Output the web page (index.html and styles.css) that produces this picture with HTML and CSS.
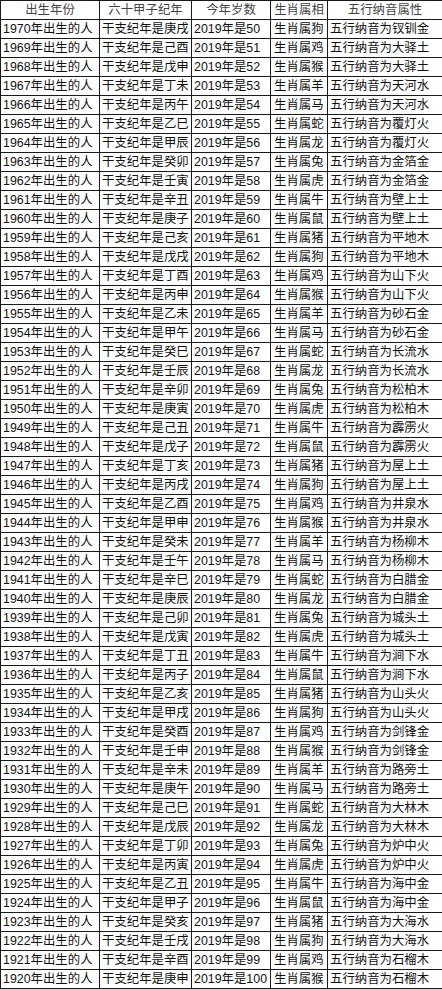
FILE: index.html
```html
<!DOCTYPE html>
<html lang="zh">
<head>
<meta charset="utf-8">
<title>出生年份</title>
<link rel="stylesheet" href="styles.css">
</head>
<body>
<table class="tbl">
<colgroup>
<col class="c1"><col class="c2"><col class="c3"><col class="c4"><col class="c5">
</colgroup>
<thead>
<tr><th>出生年份</th><th>六十甲子纪年</th><th>今年岁数</th><th>生肖属相</th><th>五行纳音属性</th></tr>
</thead>
<tbody>
<tr><td>1970年出生的人</td><td>干支纪年是庚戌</td><td>2019年是50</td><td>生肖属狗</td><td>五行纳音为钗钏金</td></tr>
<tr><td>1969年出生的人</td><td>干支纪年是己酉</td><td>2019年是51</td><td>生肖属鸡</td><td>五行纳音为大驿土</td></tr>
<tr><td>1968年出生的人</td><td>干支纪年是戊申</td><td>2019年是52</td><td>生肖属猴</td><td>五行纳音为大驿土</td></tr>
<tr><td>1967年出生的人</td><td>干支纪年是丁未</td><td>2019年是53</td><td>生肖属羊</td><td>五行纳音为天河水</td></tr>
<tr><td>1966年出生的人</td><td>干支纪年是丙午</td><td>2019年是54</td><td>生肖属马</td><td>五行纳音为天河水</td></tr>
<tr><td>1965年出生的人</td><td>干支纪年是乙巳</td><td>2019年是55</td><td>生肖属蛇</td><td>五行纳音为覆灯火</td></tr>
<tr><td>1964年出生的人</td><td>干支纪年是甲辰</td><td>2019年是56</td><td>生肖属龙</td><td>五行纳音为覆灯火</td></tr>
<tr><td>1963年出生的人</td><td>干支纪年是癸卯</td><td>2019年是57</td><td>生肖属兔</td><td>五行纳音为金箔金</td></tr>
<tr><td>1962年出生的人</td><td>干支纪年是壬寅</td><td>2019年是58</td><td>生肖属虎</td><td>五行纳音为金箔金</td></tr>
<tr><td>1961年出生的人</td><td>干支纪年是辛丑</td><td>2019年是59</td><td>生肖属牛</td><td>五行纳音为壁上土</td></tr>
<tr><td>1960年出生的人</td><td>干支纪年是庚子</td><td>2019年是60</td><td>生肖属鼠</td><td>五行纳音为壁上土</td></tr>
<tr><td>1959年出生的人</td><td>干支纪年是己亥</td><td>2019年是61</td><td>生肖属猪</td><td>五行纳音为平地木</td></tr>
<tr><td>1958年出生的人</td><td>干支纪年是戊戌</td><td>2019年是62</td><td>生肖属狗</td><td>五行纳音为平地木</td></tr>
<tr><td>1957年出生的人</td><td>干支纪年是丁酉</td><td>2019年是63</td><td>生肖属鸡</td><td>五行纳音为山下火</td></tr>
<tr><td>1956年出生的人</td><td>干支纪年是丙申</td><td>2019年是64</td><td>生肖属猴</td><td>五行纳音为山下火</td></tr>
<tr><td>1955年出生的人</td><td>干支纪年是乙未</td><td>2019年是65</td><td>生肖属羊</td><td>五行纳音为砂石金</td></tr>
<tr><td>1954年出生的人</td><td>干支纪年是甲午</td><td>2019年是66</td><td>生肖属马</td><td>五行纳音为砂石金</td></tr>
<tr><td>1953年出生的人</td><td>干支纪年是癸巳</td><td>2019年是67</td><td>生肖属蛇</td><td>五行纳音为长流水</td></tr>
<tr><td>1952年出生的人</td><td>干支纪年是壬辰</td><td>2019年是68</td><td>生肖属龙</td><td>五行纳音为长流水</td></tr>
<tr><td>1951年出生的人</td><td>干支纪年是辛卯</td><td>2019年是69</td><td>生肖属兔</td><td>五行纳音为松柏木</td></tr>
<tr><td>1950年出生的人</td><td>干支纪年是庚寅</td><td>2019年是70</td><td>生肖属虎</td><td>五行纳音为松柏木</td></tr>
<tr><td>1949年出生的人</td><td>干支纪年是己丑</td><td>2019年是71</td><td>生肖属牛</td><td>五行纳音为霹雳火</td></tr>
<tr><td>1948年出生的人</td><td>干支纪年是戊子</td><td>2019年是72</td><td>生肖属鼠</td><td>五行纳音为霹雳火</td></tr>
<tr><td>1947年出生的人</td><td>干支纪年是丁亥</td><td>2019年是73</td><td>生肖属猪</td><td>五行纳音为屋上土</td></tr>
<tr><td>1946年出生的人</td><td>干支纪年是丙戌</td><td>2019年是74</td><td>生肖属狗</td><td>五行纳音为屋上土</td></tr>
<tr><td>1945年出生的人</td><td>干支纪年是乙酉</td><td>2019年是75</td><td>生肖属鸡</td><td>五行纳音为井泉水</td></tr>
<tr><td>1944年出生的人</td><td>干支纪年是甲申</td><td>2019年是76</td><td>生肖属猴</td><td>五行纳音为井泉水</td></tr>
<tr><td>1943年出生的人</td><td>干支纪年是癸未</td><td>2019年是77</td><td>生肖属羊</td><td>五行纳音为杨柳木</td></tr>
<tr><td>1942年出生的人</td><td>干支纪年是壬午</td><td>2019年是78</td><td>生肖属马</td><td>五行纳音为杨柳木</td></tr>
<tr><td>1941年出生的人</td><td>干支纪年是辛巳</td><td>2019年是79</td><td>生肖属蛇</td><td>五行纳音为白腊金</td></tr>
<tr><td>1940年出生的人</td><td>干支纪年是庚辰</td><td>2019年是80</td><td>生肖属龙</td><td>五行纳音为白腊金</td></tr>
<tr><td>1939年出生的人</td><td>干支纪年是己卯</td><td>2019年是81</td><td>生肖属兔</td><td>五行纳音为城头土</td></tr>
<tr><td>1938年出生的人</td><td>干支纪年是戊寅</td><td>2019年是82</td><td>生肖属虎</td><td>五行纳音为城头土</td></tr>
<tr><td>1937年出生的人</td><td>干支纪年是丁丑</td><td>2019年是83</td><td>生肖属牛</td><td>五行纳音为涧下水</td></tr>
<tr><td>1936年出生的人</td><td>干支纪年是丙子</td><td>2019年是84</td><td>生肖属鼠</td><td>五行纳音为涧下水</td></tr>
<tr><td>1935年出生的人</td><td>干支纪年是乙亥</td><td>2019年是85</td><td>生肖属猪</td><td>五行纳音为山头火</td></tr>
<tr><td>1934年出生的人</td><td>干支纪年是甲戌</td><td>2019年是86</td><td>生肖属狗</td><td>五行纳音为山头火</td></tr>
<tr><td>1933年出生的人</td><td>干支纪年是癸酉</td><td>2019年是87</td><td>生肖属鸡</td><td>五行纳音为剑锋金</td></tr>
<tr><td>1932年出生的人</td><td>干支纪年是壬申</td><td>2019年是88</td><td>生肖属猴</td><td>五行纳音为剑锋金</td></tr>
<tr><td>1931年出生的人</td><td>干支纪年是辛未</td><td>2019年是89</td><td>生肖属羊</td><td>五行纳音为路旁土</td></tr>
<tr><td>1930年出生的人</td><td>干支纪年是庚午</td><td>2019年是90</td><td>生肖属马</td><td>五行纳音为路旁土</td></tr>
<tr><td>1929年出生的人</td><td>干支纪年是己巳</td><td>2019年是91</td><td>生肖属蛇</td><td>五行纳音为大林木</td></tr>
<tr><td>1928年出生的人</td><td>干支纪年是戊辰</td><td>2019年是92</td><td>生肖属龙</td><td>五行纳音为大林木</td></tr>
<tr><td>1927年出生的人</td><td>干支纪年是丁卯</td><td>2019年是93</td><td>生肖属兔</td><td>五行纳音为炉中火</td></tr>
<tr><td>1926年出生的人</td><td>干支纪年是丙寅</td><td>2019年是94</td><td>生肖属虎</td><td>五行纳音为炉中火</td></tr>
<tr><td>1925年出生的人</td><td>干支纪年是乙丑</td><td>2019年是95</td><td>生肖属牛</td><td>五行纳音为海中金</td></tr>
<tr><td>1924年出生的人</td><td>干支纪年是甲子</td><td>2019年是96</td><td>生肖属鼠</td><td>五行纳音为海中金</td></tr>
<tr><td>1923年出生的人</td><td>干支纪年是癸亥</td><td>2019年是97</td><td>生肖属猪</td><td>五行纳音为大海水</td></tr>
<tr><td>1922年出生的人</td><td>干支纪年是壬戌</td><td>2019年是98</td><td>生肖属狗</td><td>五行纳音为大海水</td></tr>
<tr><td>1921年出生的人</td><td>干支纪年是辛酉</td><td>2019年是99</td><td>生肖属鸡</td><td>五行纳音为石榴木</td></tr>
<tr><td>1920年出生的人</td><td>干支纪年是庚申</td><td>2019年是100</td><td>生肖属猴</td><td>五行纳音为石榴木</td></tr>
</tbody>
</table>
</body>
</html>
```

FILE: styles.css
```css
html, body {
  margin: 0;
  padding: 0;
  background: #fff;
}

.tbl {
  border-collapse: collapse;
  table-layout: fixed;
  width: 442px;
  font-family: "Liberation Sans", "Noto Sans CJK SC", sans-serif;
  font-size: 12.4px;
  color: #111;
}

.c1 { width: 99px; }
.c2 { width: 92px; }
.c3 { width: 79px; }
.c4 { width: 57px; }
.c5 { width: 115px; }

.tbl th,
.tbl td {
  border: 1px solid #1a1a1a;
  height: 18px;
  line-height: 18px;
  padding: 0 0 0 2px;
  white-space: nowrap;
  overflow: hidden;
  vertical-align: middle;
}

.tbl th {
  font-weight: normal;
  text-align: center;
  color: #444;
  padding: 0;
}

.tbl td {
  text-align: left;
}

.tbl td:nth-child(4) {
  padding-left: 3px;
}
```
